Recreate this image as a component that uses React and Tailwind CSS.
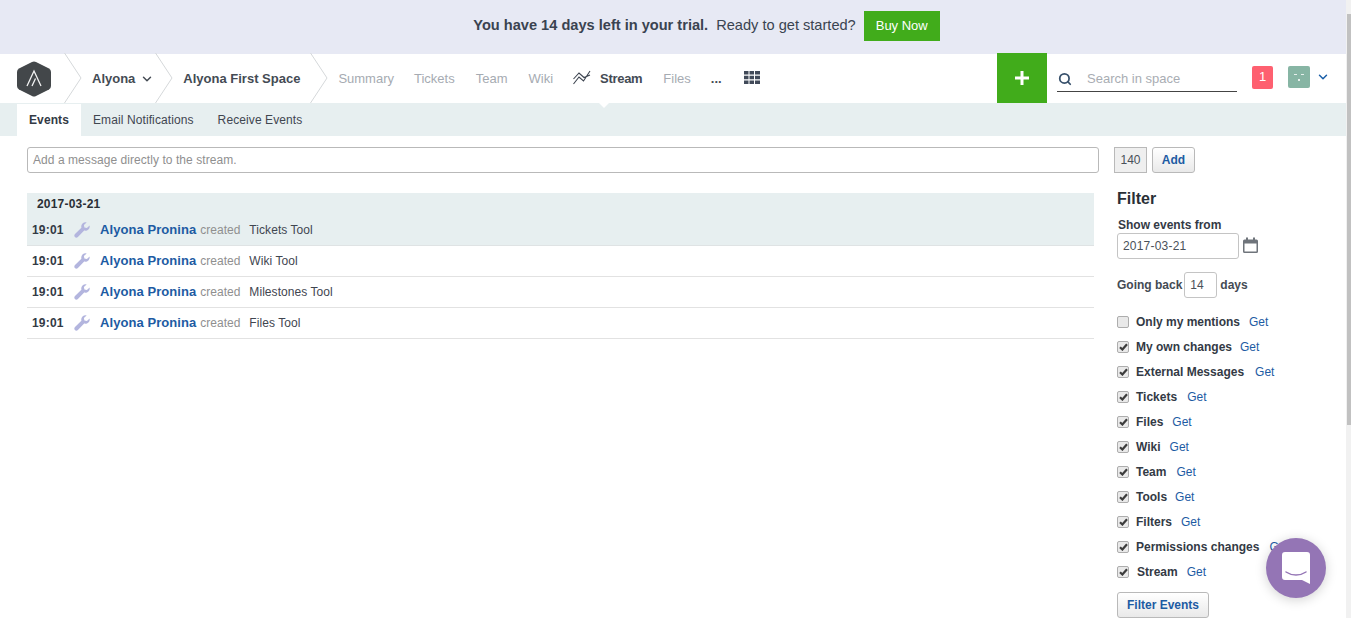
import React from "react";
import { ChevronDown, Search } from "lucide-react";

const navLinks = [
  { label: "Summary", ml: "ml-0" },
  { label: "Tickets", ml: "ml-[20px]" },
  { label: "Team", ml: "ml-[21px]" },
  { label: "Wiki", ml: "ml-[21px]" },
];

const events = [
  { what: "Tickets Tool", active: true },
  { what: "Wiki Tool" },
  { what: "Milestones Tool" },
  { what: "Files Tool" },
];

const filters = [
  { label: "Only my mentions", checked: false, gap: "ml-[9px]" },
  { label: "My own changes", checked: true, gap: "ml-[8px]" },
  { label: "External Messages", checked: true, gap: "ml-[11px]" },
  { label: "Tickets", checked: true, gap: "ml-[10px]" },
  { label: "Files", checked: true, gap: "ml-[9px]" },
  { label: "Wiki", checked: true, gap: "ml-[9px]" },
  { label: "Team", checked: true, gap: "ml-[10px]" },
  { label: "Tools", checked: true, gap: "ml-[8px]" },
  { label: "Filters", checked: true, gap: "ml-[9px]" },
  { label: "Permissions changes", checked: true, gap: "ml-[10px]" },
  { label: "Stream", checked: true, gap: "ml-[9px]", labelGap: "ml-[8px]" },
];

const Crumb = () => (
  <svg width="18" height="50" viewBox="0 0 18 50" className="shrink-0 -mt-px">
    <path d="M0.5 0 L17 25 L0.5 50" fill="none" stroke="#d5d8da" strokeWidth="1" />
  </svg>
);

const Wrench = () => (
  <svg width="16" height="16" viewBox="0 0 16 16" className="shrink-0">
    <path
      d="M15.6 3.4c.3 1.5-.1 3-1.2 4.1-1.1 1.100-2.700 1.500-4.200 1.100L3.900 15c-.9.900-2.200.900-3 .1-.8-.8-.8-2.100.1-3l6.400-6.300c-.4-1.500 0-3.100 1.100-4.200C9.600.5 11.100.1 12.600.4L9.900 3.100l.5 2.500 2.500.5z"
      fill="#b3b5de"
    />
  </svg>
);

const CheckBox = ({ checked }) => (
  <span className="w-[12px] h-[12px] shrink-0 rounded-[2px] border border-[#adadad] bg-[#e9e9e9] flex items-center justify-center">
    {checked && (
      <svg width="9" height="8" viewBox="0 0 9 8">
        <path d="M1 4.200 L3.400 6.500 L8 1.200" fill="none" stroke="#3c3c3c" strokeWidth="2.200" />
      </svg>
    )}
  </span>
);

export default function App() {
  return (
    <div className="relative h-[618px] w-[1351px] overflow-hidden bg-white font-['Liberation_Sans',Arial,sans-serif] text-[12px] text-[#333a45]">
      <div className="w-[1346px]">
        {/* trial banner */}
        <div className="h-[54px] bg-[#e7e9f4] flex items-center justify-center pb-[2px] pl-[67px]">
          <span className="text-[14.6px] font-bold text-[#3a4350]">You have 14 days left in your trial.</span>
          <span className="ml-[8px] text-[14.6px] text-[#3a4350]">Ready to get started?</span>
          <button className="ml-[8px] h-[30px] w-[76px] bg-[#41ac1b] text-white text-[13px]">Buy Now</button>
        </div>

        {/* main nav */}
        <div className="relative h-[49px] flex items-center bg-white text-[13px]">
          <svg width="34" height="36" viewBox="0 0 34 36" className="ml-[17px] mr-[13px] shrink-0">
            <path d="M15 1 Q17 0 19 1 L32 7.500 Q34 8.500 34 11 L34 25 Q34 27.500 32 28.500 L19 35 Q17 36 15 35 L2 28.500 Q0 27.500 0 25 L0 11 Q0 8.500 2 7.500 Z" fill="#43474a" />
            <path d="M10 25 L17 10 L24 25 M15 25 L18.500 17.500" fill="none" stroke="#f2f2f2" strokeWidth="1.300" />
          </svg>
          <Crumb />
          <span className="ml-[10px] font-bold text-[#444b54]">Alyona</span>
          <ChevronDown size={14} strokeWidth={2.5} className="ml-[5px] text-[#444b54]" />
          <span className="ml-[1px]"><Crumb /></span>
          <span className="ml-[10px] font-bold text-[#444b54]">Alyona First Space</span>
          <span className="ml-[10px]"><Crumb /></span>
          <span className="ml-[10px] flex items-center text-[#a6abb2]">
            {navLinks.map((l) => (
              <span key={l.label} className={l.ml}>{l.label}</span>
            ))}
          </span>
          <svg width="18" height="16" viewBox="0 0 18 16" className="ml-[20px] mb-[2px] shrink-0">
            <path d="M0.500 14 L6 7 L10.500 11 L17 1 M0.500 9 L6 3 L11 7.500 L17 5" fill="none" stroke="#3d4550" strokeWidth="1.100" />
          </svg>
          <span className="ml-[9px] font-bold text-[#444b54] tracking-[-0.3px]">Stream</span>
          <span className="ml-[21px] text-[#a6abb2]">Files</span>
          <span className="ml-[20px] font-bold text-[#444b54]">...</span>
          <svg width="16" height="13" viewBox="0 0 16 13" className="ml-[22px] mb-[2px] shrink-0">
            <path d="M0 0h4.500v3.500H0zM5.500 0H10v3.500H5.500zM11 0h5v3.500h-5zM0 4.700h4.500v3.500H0zM5.500 4.700H10v3.500H5.500zM11 4.700h5v3.500h-5zM0 9.400h4.500V13H0zM5.500 9.400H10V13H5.500zM11 9.400h5V13h-5z" fill="#414a59" />
          </svg>

          <div className="ml-auto flex items-center h-full">
            <div className="-mt-[2px] h-[50px] w-[50px] bg-[#41ac1b] flex items-center justify-center">
              <svg width="16" height="16" viewBox="0 0 16 16">
                <path d="M8 1v14M1 8h14" stroke="#ffffff" strokeWidth="3" />
              </svg>
            </div>
            <div className="ml-[10px] w-[180px] h-[30px] mt-[-3px] flex items-center border-b border-[#444444]">
              <Search size={14} strokeWidth={3} className="ml-[1px] mt-[4px] text-[#37506b]" />
              <span className="ml-[15px] mt-[5px] text-[#a9adb3]">Search in space</span>
            </div>
            <div className="ml-[15px] mt-[-3px] h-[23px] w-[21px] rounded-[2px] bg-[#fe6070] text-white flex items-center justify-center">1</div>
            <div className="ml-[15px] mt-[-3px] h-[22px] w-[22px] rounded-[2px] bg-[#87b5a4] relative">
              <span className="absolute left-[6px] top-[8px] h-px w-[3px] bg-white/80" />
              <span className="absolute left-[13px] top-[8px] h-px w-[3px] bg-white/80" />
              <span className="absolute left-[10px] top-[13px] h-[2px] w-[2px] bg-white/80" />
            </div>
            <ChevronDown size={14} strokeWidth={2.5} className="ml-[6px] mr-[16px] mt-[-4px] text-[#1a5ea8]" />
          </div>
          {/* caret under the current nav item */}
          <span className="absolute left-[599px] top-[49px] z-10 h-0 w-0 border-x-[5px] border-t-[5px] border-x-transparent border-t-white" />
        </div>

        {/* sub tabs */}
        <div className="h-[33px] bg-[#e7eff0] flex items-stretch pl-[17px] text-[12px] tracking-[0.1px]">
          <div className="mt-px w-[64px] bg-white font-bold text-[#333a45] flex items-center justify-center">Events</div>
          <div className="ml-[12px] flex items-center text-[#3f4650]">Email Notifications</div>
          <div className="ml-[24px] flex items-center text-[#3f4650]">Receive Events</div>
        </div>

        {/* message box */}
        <div className="mt-[11px] ml-[27px] flex items-center h-[26px]">
          <div className="w-[1072px] h-full rounded-[3px] border border-[#b9b9b9] px-[5px] flex items-center text-[#8f8f8f] tracking-[0.06px]">
            Add a message directly to the stream.
          </div>
          <div className="ml-[15px] w-[33px] h-full border border-[#b9b9b9] bg-[#efefef] flex items-center justify-center text-[#4a5159]">140</div>
          <button className="ml-[5px] w-[43px] h-full rounded-[3px] border border-[#b9b9b9] bg-gradient-to-b from-white to-[#e9e9e9] font-bold text-[#1d5ba3]">Add</button>
        </div>

        <div className="flex items-start ml-[27px]">
          {/* stream */}
          <div className="mt-[20px] w-[1067px]">
            {events.map((e, i) => (
              <div key={e.what} className={e.active ? "bg-[#e7eff0] border-b border-[#dfe3e4]" : "border-b border-[#e2e2e2]"}>
                {i === 0 && <div className="pl-[10px] pt-[2px] h-[22px] font-bold text-[#2a2f36] tracking-[0.2px]">2017-03-21</div>}
                <div className="h-[30px] flex items-center pl-[5px]">
                  <span className="w-[42px] font-bold text-[#333a45] tracking-[0.2px]">19:01</span>
                  <Wrench />
                  <span className="ml-[10px] text-[13px] font-bold text-[#1d5ba3] tracking-[0.07px]">Alyona Pronina</span>
                  <span className="ml-[4px] text-[#8f8f8f]">created</span>
                  <span className="ml-[9px] text-[#3f4650] tracking-[0.06px]">{e.what}</span>
                </div>
              </div>
            ))}
          </div>

          {/* filter sidebar */}
          <div className="ml-[23px] mt-[17px] w-[200px]">
            <h3 className="text-[16px] leading-[18px] font-bold text-[#2a2f36]">Filter</h3>
            <div className="mt-[10px] pl-px leading-[14px] font-bold text-[#333a45]">Show events from</div>
            <div className="mt-px flex items-center">
              <div className="h-[26px] w-[122px] rounded-[3px] border border-[#c4c4c4] pl-[5px] flex items-center text-[#4a5159] tracking-[0.2px]">2017-03-21</div>
              <svg width="15" height="16" viewBox="0 0 15 16" className="ml-[4px] mb-[2px]">
                <path d="M1.500 2.500h12a1.500 1.500 0 0 1 1.500 1.500v10.500a1.500 1.500 0 0 1-1.500 1.500h-12a1.500 1.500 0 0 1-1.500-1.500V4a1.500 1.500 0 0 1 1.500-1.500z M1.500 6.500v8h12v-8z" fill="#6f747b" fillRule="evenodd" />
                <path d="M3 0.500h2v3.500H3zM10 0.500h2v3.500h-2z" fill="#6f747b" />
              </svg>
            </div>
            <div className="mt-[13px] flex items-center font-bold text-[#444b54] h-[26px]">
              <span className="font-bold">Going back</span>
              <div className="ml-[2px] h-[26px] w-[33px] rounded-[3px] border border-[#c4c4c4] pl-[5px] flex items-center font-normal text-[#4a5159]">14</div>
              <span className="ml-[3px]">days</span>
            </div>
            <div className="mt-[11px]">
              {filters.map((f) => (
                <div key={f.label} className="h-[25px] flex items-center">
                  <CheckBox checked={f.checked} />
                  <span className={(f.labelGap || "ml-[7px]") + " font-bold text-[#333a45]"}>{f.label}</span>
                  <span className={f.gap + " text-[#1d5ba3]"}>Get</span>
                </div>
              ))}
            </div>
            <button className="mt-[8px] h-[26px] w-[92px] rounded-[3px] border border-[#b9b9b9] bg-gradient-to-b from-white to-[#e9e9e9] font-bold text-[#1d5ba3]">Filter Events</button>
          </div>
        </div>
      </div>

      {/* scrollbar */}
      <div className="absolute right-0 top-0 h-full w-[5px] bg-[#f1f1f1] pt-[14px] pl-px">
        <div className="h-[411px] w-full bg-[#c1c1c1]" />
      </div>

      {/* chat launcher */}
      <div className="absolute left-[1266px] top-[538px] h-[60px] w-[60px] rounded-full bg-[#9475b5] shadow-[0_2px_12px_rgba(0,0,0,0.18)] flex items-center justify-center">
        <svg width="28" height="32" viewBox="0 0 28 32">
          <path d="M3 0h22a3 3 0 0 1 3 3v29l-8-4H3a3 3 0 0 1-3-3V3a3 3 0 0 1 3-3z" fill="#ffffff" />
          <path d="M4 20c6 4 14 4 20 0" fill="none" stroke="#9475b5" strokeWidth="1.500" strokeLinecap="round" />
        </svg>
      </div>
    </div>
  );
}
